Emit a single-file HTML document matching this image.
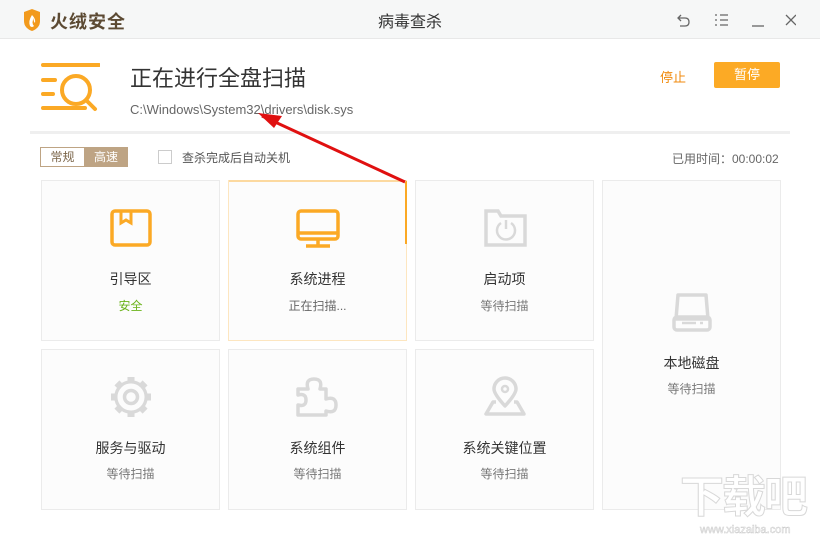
<!DOCTYPE html><html><head><meta charset="utf-8"><style>
*{margin:0;padding:0;box-sizing:border-box}
body{width:820px;height:540px;background:#fff;font-family:"Liberation Sans","Noto Sans CJK SC",sans-serif;position:relative;overflow:hidden}
.a{position:absolute}
.card{position:absolute;background:#fcfcfc;border:1px solid #ebebeb;text-align:center}
.t{position:absolute;left:0;right:0;font-size:14px;color:#333}
.s{position:absolute;left:0;right:0;font-size:12px;color:#777}
</style></head><body>
<div class="a" style="left:0;top:0;width:820px;height:39px;background:#f6f7f7;border-bottom:1px solid #e8e8e8"></div>
<svg class="a" style="left:22px;top:9px" width="20" height="22" viewBox="0 0 20 22"><path d="M2 3 L10 0 L18 3 L18 12 Q18 19 10 22 Q2 19 2 12Z" fill="#f29a1d"/><path d="M10 6 Q6 12 8 17 Q10 19 12 17 Q9 14 12 9 Q11 12 13 14 Q14 10 10 6Z" fill="#fff"/></svg>
<div class="a" style="left:50px;top:8px;font-size:18px;font-weight:bold;color:#5c4a33;letter-spacing:1px">火绒安全</div>
<div class="a" style="left:378px;top:8px;font-size:16px;color:#333">病毒查杀</div>
<svg class="a" style="left:676px;top:12px" width="120" height="16" viewBox="0 0 120 16" fill="none" stroke="#666" stroke-width="1.3"><path d="M5 3 L2 6 L5 9 M2 6 H9 Q13 6 13 10 Q13 14 9 14 H4"/><path d="M39 3h2M44 3h8M39 8h2M44 8h8M39 13h2M44 13h8"/><path d="M76 14h12"/><path d="M110 3 L120 13 M120 3 L110 13"/></svg>
<svg class="a" style="left:40px;top:62px" width="60" height="56" viewBox="0 0 60 56" fill="none" stroke="#fba925" stroke-width="4" stroke-linecap="round"><path d="M3 3h56M3 18h12M3 32h10M3 46h42"/><circle cx="36" cy="28" r="14"/><path d="M46 38l9 9"/></svg>
<div class="a" style="left:130px;top:61px;font-size:22px;color:#333">正在进行全盘扫描</div>
<div class="a" style="left:130px;top:102px;font-size:13px;color:#666">C:\Windows\System32\drivers\disk.sys</div>
<div class="a" style="left:660px;top:67px;font-size:13px;color:#f08a0c">停止</div>
<div class="a" style="left:714px;top:62px;width:66px;height:26px;background:#fcaa25;border-radius:2px;color:#fff;font-size:13px;text-align:center;line-height:26px">暂停</div>
<div class="a" style="left:30px;top:131px;width:760px;height:3px;background:#efefef"></div>
<div class="a" style="left:40px;top:147px;width:88px;height:20px;border:1px solid #bea484;font-size:12px;line-height:18px;color:#7b6549"><span style="display:inline-block;width:43px;text-align:center">常规</span><span style="position:absolute;left:43px;top:0;width:44px;height:18px;background:#bea484;color:#fff;text-align:center">高速</span></div>
<div class="a" style="left:158px;top:150px;width:14px;height:14px;border:1px solid #ccc"></div>
<div class="a" style="left:182px;top:149px;font-size:12px;color:#555">查杀完成后自动关机</div>
<div class="a" style="left:672px;top:150px;font-size:12px;color:#666">已用时间：00:00:02</div>

<div class="card" style="left:41px;top:180px;width:179px;height:161px">
<svg class="a" style="left:68px;top:28px" width="42" height="38" viewBox="0 0 42 38" fill="none" stroke="#fba925" stroke-width="3.5"><rect x="2" y="2" width="38" height="34" rx="3"/><path d="M11 2v12l5-3 5 3V2" stroke-width="3"/></svg>
<div class="t" style="top:88px">引导区</div><div class="s" style="top:116px;color:#6cb31c">安全</div></div>
<div class="card" style="left:228px;top:180px;width:179px;height:161px;border-color:#fde6c0">
<div class="a" style="right:-1px;top:0;width:2px;height:63px;background:#fba925"></div>
<div class="a" style="left:0;top:-1px;right:0;height:2px;background:#fcd9a0"></div>
<svg class="a" style="left:67px;top:28px" width="44" height="40" viewBox="0 0 44 40" fill="none" stroke="#fba925" stroke-width="3.5"><rect x="2" y="2" width="40" height="28" rx="3"/><path d="M3 24h38M22 30v6M10 37h24"/></svg>
<div class="t" style="top:88px">系统进程</div><div class="s" style="top:116px;color:#666">正在扫描...</div></div>
<div class="card" style="left:415px;top:180px;width:179px;height:161px">
<svg class="a" style="left:68px;top:28px" width="44" height="38" viewBox="0 0 44 38" fill="none" stroke="#d9d9d9" stroke-width="3.5"><path d="M2 2h12l3 5h24v29H2Z"/><path d="M17 14a9 9 0 1 0 10 0M22 11v9" stroke-width="2.5"/></svg>
<div class="t" style="top:88px">启动项</div><div class="s" style="top:116px">等待扫描</div></div>
<div class="card" style="left:602px;top:180px;width:179px;height:330px">
<svg class="a" style="left:69px;top:111px" width="40" height="40" viewBox="0 0 40 40" fill="none" stroke="#d9d9d9" stroke-width="3.5"><path d="M6 3h28l2 24H4Z" stroke-linejoin="round"/><rect x="2" y="25" width="36" height="13" rx="3"/><path d="M10 31h14M28 31h3" stroke-width="2.5"/></svg>
<div class="t" style="top:172px">本地磁盘</div><div class="s" style="top:199px">等待扫描</div></div>

<div class="card" style="left:41px;top:349px;width:179px;height:161px">
<svg class="a" style="left:66px;top:24px" width="46" height="46" viewBox="0 0 46 46" fill="none" stroke="#d9d9d9" stroke-width="3.5" stroke-linejoin="round"><g transform="translate(23 23)"><circle r="15"/><circle r="6.5"/><g stroke-width="7"><path d="M0 -15v-5M0 15v5M-15 0h-5M15 0h5M10.6 -10.6l3.5 -3.5M-10.6 10.6l-3.5 3.5M10.6 10.6l3.5 3.5M-10.6 -10.6l-3.5 -3.5"/></g><circle r="12" stroke="#fcfcfc" stroke-width="3"/></g></svg>
<div class="t" style="top:88px">服务与驱动</div><div class="s" style="top:115px">等待扫描</div></div>
<div class="card" style="left:228px;top:349px;width:179px;height:161px">
<svg class="a" style="left:67px;top:27px" width="42" height="40" viewBox="0 0 42 40" fill="none" stroke="#d9d9d9" stroke-width="3.5" stroke-linejoin="round"><path d="M2 12h10q-3-10 6-10t6 10h6v10q10-3 10 6t-10 6v4H2v-10q8 2 8-5t-8-5Z"/></svg>
<div class="t" style="top:88px">系统组件</div><div class="s" style="top:115px">等待扫描</div></div>
<div class="card" style="left:415px;top:349px;width:179px;height:161px">
<svg class="a" style="left:68px;top:26px" width="42" height="42" viewBox="0 0 42 42" fill="none" stroke="#d9d9d9" stroke-width="3.5" stroke-linejoin="round"><path d="M21 30Q10 18 10 13a11 11 0 0 1 22 0q0 5-11 17Z"/><circle cx="21" cy="13" r="3" stroke-width="2.5"/><path d="M12 26H9L2 38h38l-7-12h-3"/></svg>
<div class="t" style="top:88px">系统关键位置</div><div class="s" style="top:115px">等待扫描</div></div>

<svg class="a" style="left:0;top:0" width="820" height="540"><path d="M405 182 L262 116" stroke="#e01010" stroke-width="3"/><path d="M258 113 L282 116 L274 128Z" fill="#e01010"/></svg>
<div class="a" style="left:680px;top:476px;font-size:44px;font-weight:bold;color:#fff;-webkit-text-stroke:1px #d8d8d8;letter-spacing:-2px;line-height:44px">下载吧</div>
<div class="a" style="left:700px;top:524px;font-size:11px;color:#fff;-webkit-text-stroke:0.5px #ccc">www.xiazaiba.com</div>
</body></html>
